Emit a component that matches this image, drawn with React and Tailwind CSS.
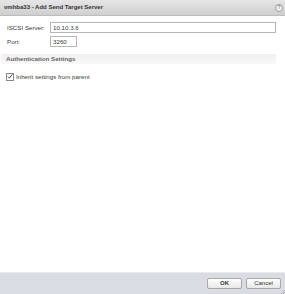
export default function App() {
  return (
    <div
      className="w-[285px] h-[294px] flex flex-col bg-white text-[#3a3a3a] text-[6.2px]"
      style={{ fontFamily: '"Liberation Sans", Arial, sans-serif' }}
    >
      {/* TITLE BAR */}
      <div className="h-[16px] shrink-0 flex items-center justify-between pl-[4px] pr-[2px] bg-gradient-to-b from-[#e6e6e6] to-[#cfcfcf] border-b border-[#bdbdbd]">
        <span className="font-bold text-[6px] text-[#333]">vmhba33 - Add Send Target Server</span>
        <span className="w-[8px] h-[8px] rounded-full border border-[#9a9a9a] bg-[#f2f2f2] text-[#888] text-[5px] font-bold flex items-center justify-center leading-none">
          ?
        </span>
      </div>

      {/* FORM */}
      <div className="flex-1 flex flex-col pt-[6px]">
        <div className="flex items-center pl-[7px] h-[11px]">
          <span className="w-[43px]">ISCSI Server:</span>
          <div className="w-[226px] h-[11px] border border-[#b5b5b5] flex items-center px-[2px]">10.10.3.6</div>
        </div>
        <div className="flex items-center pl-[7px] h-[11px] mt-[3px]">
          <span className="w-[43px]">Port:</span>
          <div className="w-[27px] h-[11px] border border-[#b5b5b5] flex items-center px-[2px]">3260</div>
        </div>

        <div className="mt-[7px] mx-[1px] w-[275px] h-[10px] flex items-center pl-[5px] bg-gradient-to-b from-[#f0f0f0] to-[#f8f8f8] font-bold text-[#666]">
          Authentication Settings
        </div>

        <div className="flex items-center pl-[6px] mt-[8px] gap-[2px]">
          <span className="w-[8px] h-[8px] border border-[#888] bg-white flex items-center justify-center">
            <svg viewBox="0 0 8 8" className="w-[7px] h-[7px]">
              <path d="M1.3 4.2 L3.2 6.2 L7 1" fill="none" stroke="#333" strokeWidth="1.2" />
            </svg>
          </span>
          <span>Inherit settings from parent</span>
        </div>
      </div>

      {/* FOOTER */}
      <div className="h-[22px] shrink-0 bg-[#d9dde3] border-t border-[#e8eaee] flex items-center justify-end gap-[4px] pr-[4px] relative">
        <button className="w-[35px] h-[11px] border border-[#a8a8a8] rounded-[2px] bg-gradient-to-b from-white to-[#e8e8e8] text-[6px] text-[#333] font-bold">
          OK
        </button>
        <button className="w-[35px] h-[11px] border border-[#a8a8a8] rounded-[2px] bg-gradient-to-b from-white to-[#e8e8e8] text-[6px] text-[#333]">
          Cancel
        </button>
        <svg viewBox="0 0 4 4" className="absolute right-0 bottom-0 w-[4px] h-[4px]">
          <path d="M4 0 L0 4 M4 2 L2 4" stroke="#999" strokeWidth="0.6" />
        </svg>
      </div>
    </div>
  );
}
